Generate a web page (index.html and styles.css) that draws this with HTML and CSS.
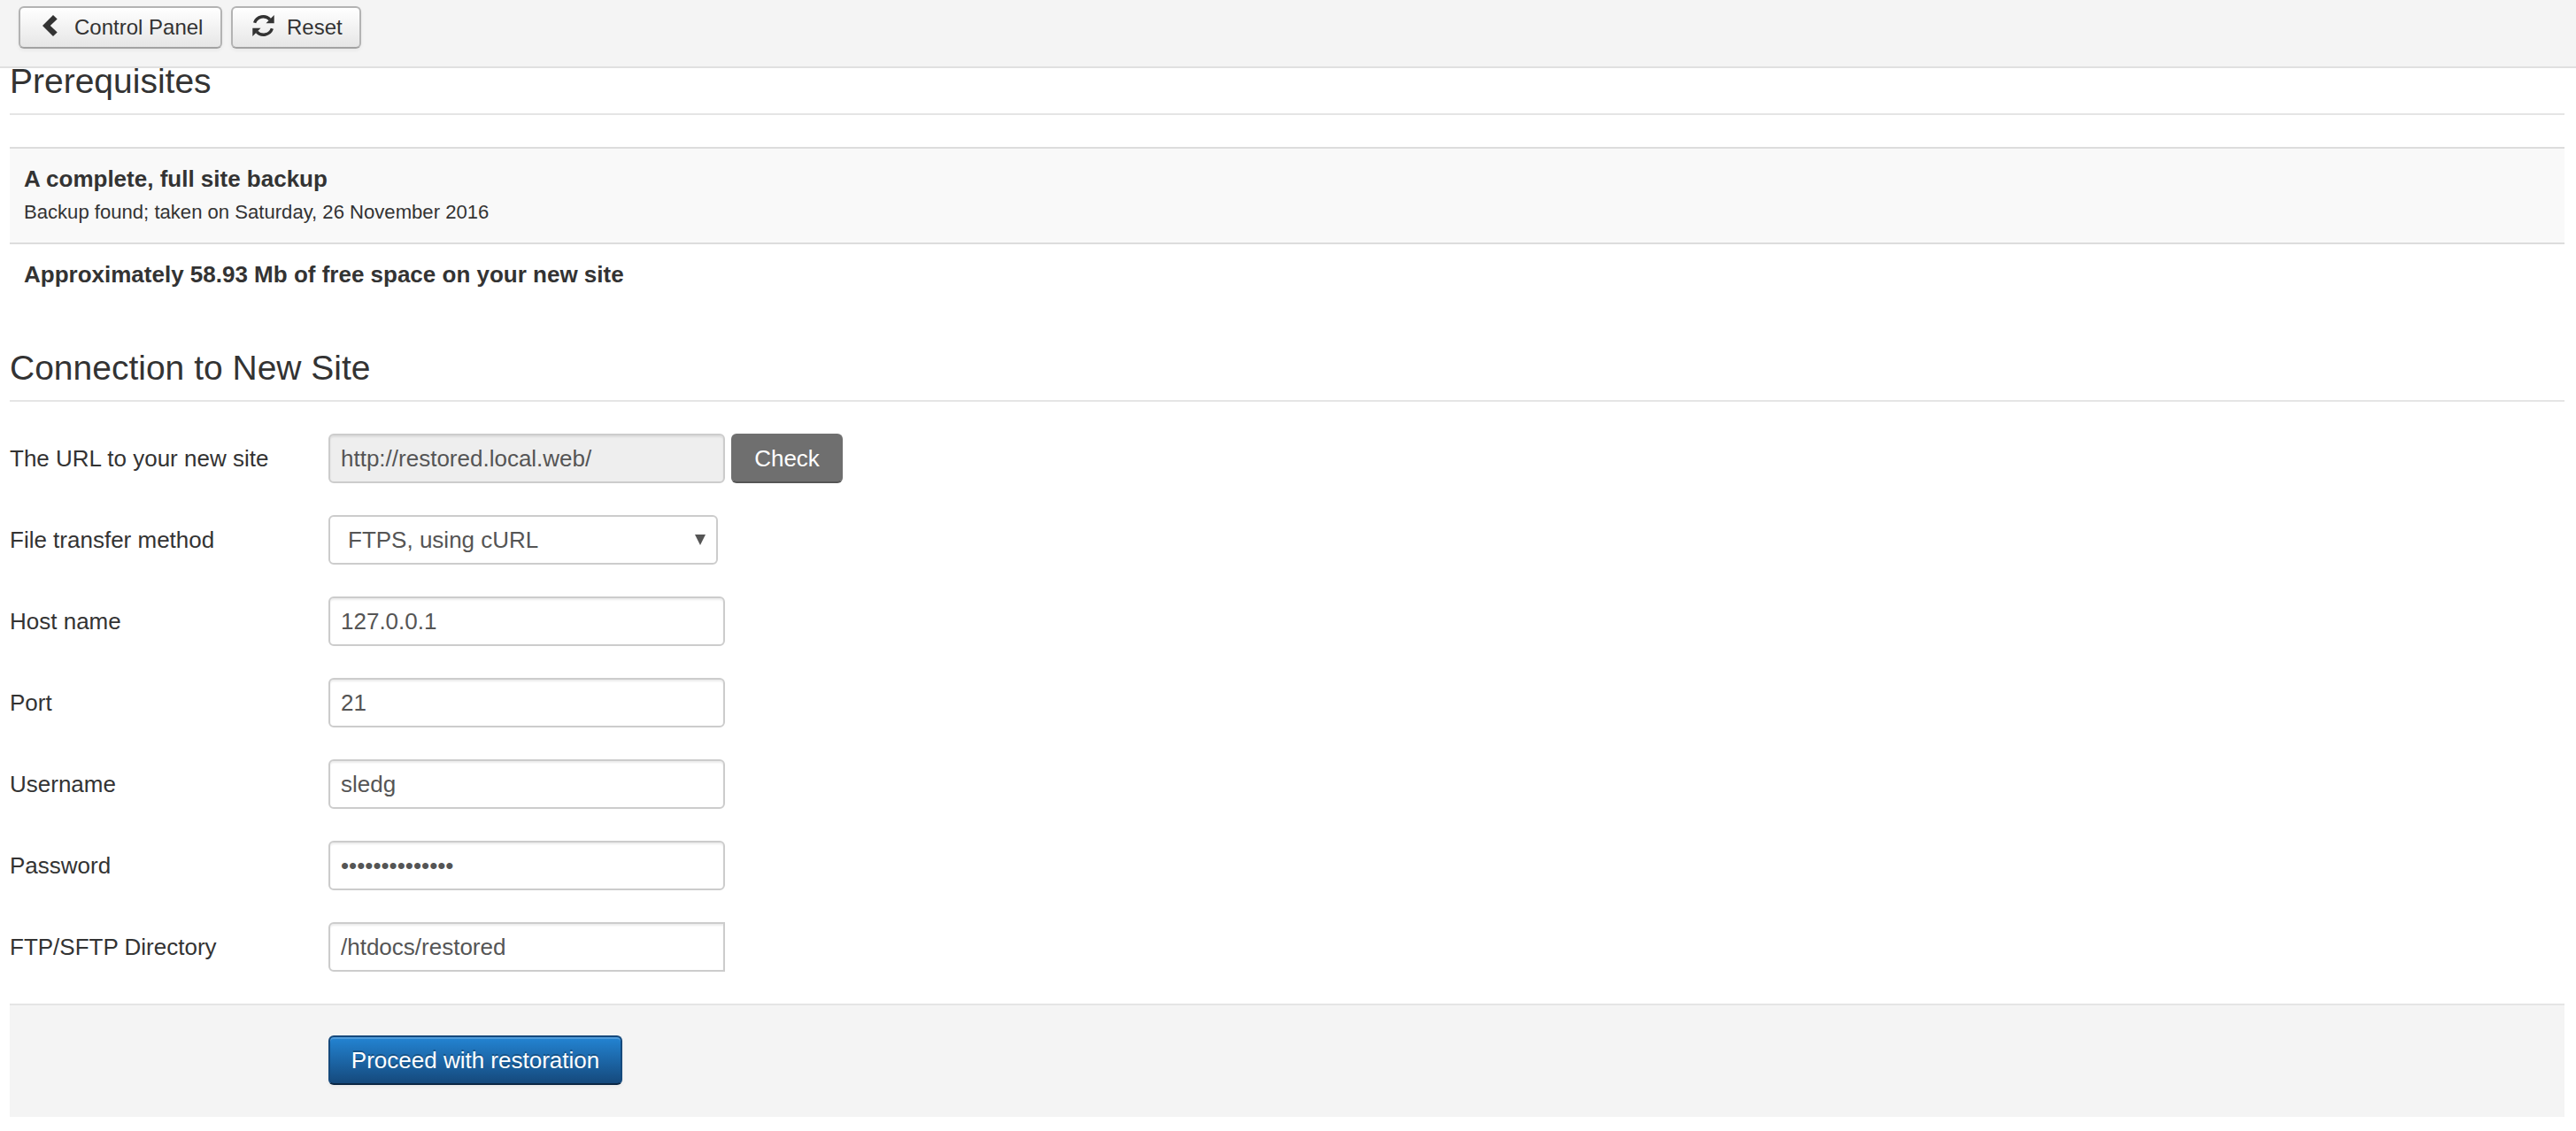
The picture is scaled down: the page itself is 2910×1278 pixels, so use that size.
FILE: index.html
```html
<!DOCTYPE html>
<html lang="en">
<head>
<meta charset="utf-8">
<title>Site Transfer Wizard</title>
<link rel="stylesheet" href="styles.css">
</head>
<body>
<nav class="toolbar">
  <button class="tool" type="button">
    <svg class="icon-back" viewBox="0 0 17 24"><path d="M12 0 16.700 4.600 8.800 12 16.700 19.400 12 24 0 12z"/></svg>
    <span>Control Panel</span>
  </button>
  <button class="tool tool-reset" type="button">
    <svg class="icon-reset" viewBox="0 0 25 24"><path d="M2.600 8.700A10.300 10.300 0 0 1 20 5.200M22.400 15.300A10.300 10.300 0 0 1 5 18.800" fill="none" stroke="#333" stroke-width="3.400"/><path d="M24.700 0v9.200h-9.200zM.3 24v-9.200h9.200z"/></svg>
    <span>Reset</span>
  </button>
</nav>
<main class="content">
  <section>
    <h3 class="legend">Prerequisites</h3>
    <ul class="requirements">
      <li class="shaded"><strong>A complete, full site backup</strong><small>Backup found; taken on Saturday, 26 November 2016</small></li>
      <li><strong>Approximately 58.93 Mb of free space on your new site</strong></li>
    </ul>
  </section>
  <form>
    <h3 class="legend">Connection to New Site</h3>
    <div class="fields">
      <label for="url">The URL to your new site</label>
      <div class="controls"><input id="url" type="text" value="http://restored.local.web/" disabled><button class="check" type="button">Check</button></div>
      <label for="method">File transfer method</label>
      <div class="controls"><div class="select"><select id="method"><option>FTPS, using cURL</option></select></div></div>
      <label for="host">Host name</label>
      <div class="controls"><input id="host" type="text" value="127.0.0.1"></div>
      <label for="port">Port</label>
      <div class="controls"><input id="port" type="text" value="21"></div>
      <label for="user">Username</label>
      <div class="controls"><input id="user" type="text" value="sledg"></div>
      <label for="pass">Password</label>
      <div class="controls"><input id="pass" type="password" value="abcdefghijklmn"></div>
      <label for="dir">FTP/SFTP Directory</label>
      <div class="controls"><input id="dir" class="joined" type="text" value="/htdocs/restored"></div>
    </div>
    <div class="actions"><button class="primary" type="button">Proceed with restoration</button></div>
  </form>
</main>
</body>
</html>
```
FILE: styles.css
```css
* { box-sizing: border-box; }
body {
  margin: 0;
  background: #fff;
  color: #333;
  font: 26px/36px "Liberation Sans", Arial, sans-serif;
}
button, input, select { margin: 0; font: inherit; }
.toolbar {
  position: relative;
  z-index: 1;
  display: flex;
  gap: 10px;
  height: 77px;
  padding: 7px 21px;
  background: #f4f4f4;
  border-bottom: 2px solid #e0e0e0;
}
.tool {
  display: flex;
  align-items: center;
  width: 230px;
  height: 48px;
  padding: 0 0 0 25px;
  border: 2px solid #b3b3b3;
  border-bottom-color: #a2a2a2;
  border-radius: 6px;
  background: linear-gradient(#fff, #e6e6e6);
  box-shadow: 0 2px 4px rgba(0, 0, 0, .05);
  color: #333;
  font-size: 24px;
}
.tool-reset { width: 147px; padding-left: 22px; }
.tool svg { fill: #333; flex: none; }
.icon-back { width: 17px; height: 24px; margin: -4px 19px 0 0; }
.icon-reset { width: 25px; height: 24px; margin: -4px 14px 0 0; }
.content { margin: -21px 13px 0 11px; }
.legend {
  margin: 0 0 36px;
  border-bottom: 2px solid #e5e5e5;
  font-size: 39px;
  font-weight: 400;
  line-height: 72px;
}
.requirements { margin: 0 0 36px; padding: 0; list-style: none; }
.requirements li { padding: 16px; border-top: 2px solid #ddd; }
.requirements .shaded { background: #f9f9f9; }
.requirements strong, .requirements small { display: block; }
.requirements small { padding-top: 2px; font-size: 22.1px; line-height: 36px; }
.fields {
  display: grid;
  grid-template-columns: 360px 1fr;
  gap: 36px 0;
}
.fields label { padding-top: 10px; }
.controls { display: flex; gap: 7px; height: 56px; }
input, select {
  width: 448px;
  height: 56px;
  padding: 8px 12px;
  border: 2px solid #ccc;
  border-radius: 6px;
  background: #fff;
  box-shadow: inset 0 2px 2px rgba(0, 0, 0, .075);
  color: #555;
}
input:disabled { background: #eee; }
.joined { border-radius: 6px 0 0 6px; }
.select { position: relative; width: 440px; }
.select::after {
  content: "";
  position: absolute;
  top: 22px;
  right: 14px;
  border: solid transparent;
  border-width: 12px 6px 0;
  border-top-color: #555;
}
select {
  width: 440px;
  padding-left: 20px;
  appearance: none;
  box-shadow: none;
}
.check, .primary {
  height: 56px;
  border-radius: 6px;
  color: #fff;
}
.check {
  width: 126px;
  padding: 0;
  border: 2px solid #6f6f6f;
  border-bottom-color: #555;
  background: #6f6f6f;
}
.actions {
  height: 128px;
  margin-top: 36px;
  padding: 34px 0 0 360px;
  border-top: 2px solid #e5e5e5;
  background: #f4f4f4;
}
.primary {
  width: 332px;
  padding: 0;
  border: 2px solid #15497c;
  border-bottom-color: #0b2744;
  background: linear-gradient(#2384d3, #15497c);
  box-shadow: inset 0 2px 0 rgba(255, 255, 255, .2), 0 2px 4px rgba(0, 0, 0, .05);
  text-shadow: 0 -2px 0 rgba(0, 0, 0, .25);
}
```
